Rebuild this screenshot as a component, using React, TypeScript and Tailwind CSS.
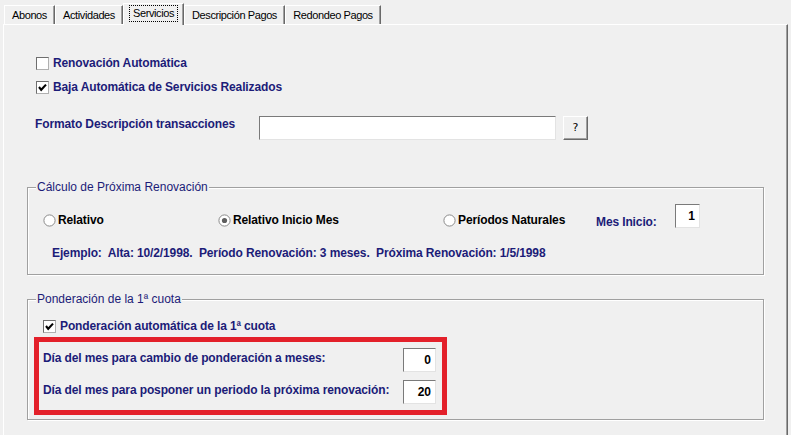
import React from "react"

const navy = "text-[#1c1c78]"

function Tab({ label, width, selected }: { label: string; width: string; selected?: boolean }) {
  if (selected) {
    return (
      <div
        className={`relative z-10 -mb-px flex h-[22px] ${width} items-start justify-center border-l border-t border-r border-l-white border-t-white border-r-[#696969] bg-[#f0f0f0] pt-[1px] shadow-[inset_-1px_0_0_#a0a0a0]`}
      >
        <span className="border border-dotted border-black px-[3px] leading-[15px]">{label}</span>
      </div>
    )
  }
  return (
    <div
      className={`flex h-[19px] ${width} items-start justify-center border-l border-t border-r border-l-white border-t-white border-r-[#696969] pt-[2px] leading-[14px] shadow-[inset_-1px_0_0_#a0a0a0]`}
    >
      {label}
    </div>
  )
}

function CheckBox({ checked, label }: { checked?: boolean; label: string }) {
  return (
    <div className="flex h-[14px] items-center">
      <div className="flex h-[13px] w-[13px] shrink-0 items-center justify-center border border-t-[#6e6e6e] border-l-[#6e6e6e] border-b-[#b0b0b0] border-r-[#b0b0b0] bg-white">
        {checked && (
          <svg width="11" height="11" viewBox="0 0 11 11">
            <polyline points="2,5 4.2,7.8 9,2.6" fill="none" stroke="#000" strokeWidth="2.1" />
          </svg>
        )}
      </div>
      <span className={`ml-[4px] font-bold tracking-[-0.12px] ${navy}`}>{label}</span>
    </div>
  )
}

function Radio({ checked, label, width }: { checked?: boolean; label: string; width: string }) {
  return (
    <div className={`mt-[9px] flex h-[14px] ${width} items-center`}>
      <svg width="13" height="13" viewBox="0 0 13 13" className="shrink-0">
        <circle cx="6.5" cy="6.5" r="5.6" fill="#fff" stroke="#8a8a8a" strokeWidth="1" />
        {checked && <circle cx="6.5" cy="6.5" r="2.6" fill="#5e5e5e" />}
      </svg>
      <span className="ml-[2px] font-bold tracking-[-0.12px] text-black">{label}</span>
    </div>
  )
}

function NumField({ value, width }: { value: string; width: string }) {
  return (
    <div
      className={`flex h-[24px] ${width} shrink-0 items-center justify-end border border-t-[#7a7a7a] border-l-[#7a7a7a] border-b-[#e3e3e3] border-r-[#e3e3e3] bg-white pr-[4px] pb-[1px] font-bold text-black`}
    >
      {value}
    </div>
  )
}

function Group({ title, height, children }: { title: string; height: string; children: React.ReactNode }) {
  return (
    <div
      className={`relative ml-[23px] w-[737px] ${height} border border-[#a0a0a0] shadow-[1px_1px_0_#fff,inset_1px_1px_0_#fff]`}
    >
      <div className={`absolute -top-[8px] left-[8px] bg-[#f0f0f0] px-[1px] ${navy}`}>{title}</div>
      {children}
    </div>
  )
}

export default function App() {
  return (
    <div className="h-[435px] w-[791px] overflow-hidden bg-[#f0f0f0] font-['Liberation_Sans',Arial,sans-serif] text-[12px] leading-[14px]">
      <div className="flex items-end pl-[4px] pt-[3px] text-[11px] tracking-[-0.4px] text-black">
        <Tab label="Abonos" width="w-[51px]" />
        <Tab label="Actividades" width="w-[68px]" />
        <Tab label="Servicios" width="w-[61px]" selected />
        <Tab label="Descripción Pagos" width="w-[101px]" />
        <Tab label="Redondeo Pagos" width="w-[96px]" />
      </div>

      <div className="ml-[3px] h-[420px] w-[785px] border-l border-t border-r border-l-white border-t-white border-r-[#696969] shadow-[inset_-1px_0_0_#a0a0a0]">
        <div className="ml-[32px] mt-[31px] flex flex-col gap-[10px]">
          <CheckBox label="Renovación Automática" />
          <CheckBox label="Baja Automática de Servicios Realizados" checked />
        </div>

        <div className="ml-[31px] mt-[22px] flex items-start">
          <span className={`mt-[1px] w-[224px] font-bold tracking-[-0.12px] ${navy}`}>Formato Descripción transacciones</span>
          <div className="h-[24px] w-[297px] border border-t-[#7a7a7a] border-l-[#7a7a7a] border-b-[#e3e3e3] border-r-[#e3e3e3] bg-white" />
          <button className="ml-[7px] flex h-[24px] w-[25px] items-center justify-center border border-t-white border-l-white border-b-[#696969] border-r-[#696969] bg-[#f0f0f0] pb-[1px] font-['DejaVu_Sans',sans-serif] text-[11px] text-black shadow-[inset_-1px_-1px_0_#a0a0a0]">
            ?
          </button>
        </div>

        <div className="mt-[47px]">
          <Group title="Cálculo de Próxima Renovación" height="h-[88px]">
            <div className="ml-[15px] mt-[16px] flex items-start">
              <Radio label="Relativo" width="w-[175px]" />
              <Radio label="Relativo Inicio Mes" width="w-[225px]" checked />
              <Radio label="Períodos Naturales" width="w-[153px]" />
              <span className={`mt-[11px] w-[79px] font-bold tracking-[-0.12px] ${navy}`}>Mes Inicio:</span>
              <NumField value="1" width="w-[25px]" />
            </div>
            <div className={`ml-[24px] mt-[17px] font-bold tracking-[-0.12px] ${navy}`}>
              Ejemplo:&nbsp; Alta: 10/2/1998.&nbsp; Período Renovación: 3 meses.&nbsp; Próxima Renovación: 1/5/1998
            </div>
          </Group>
        </div>

        <div className="mt-[24px]">
          <Group title="Ponderación de la 1ª cuota" height="h-[121px]">
            <div className="ml-[15px] mt-[19px]">
              <CheckBox label="Ponderación automática de la 1ª cuota" checked />
            </div>
            <div className="ml-[6px] mt-[4px] flex h-[78px] w-[413px] flex-col gap-[8px] border-[5px] border-[#e3202a] pl-[4px] pt-[6px]">
              <div className="flex items-start">
                <span className={`mt-[3px] w-[360px] font-bold tracking-[-0.12px] ${navy}`}>Día del mes para cambio de ponderación a meses:</span>
                <NumField value="0" width="w-[33px]" />
              </div>
              <div className="flex items-start">
                <span className={`mt-[3px] w-[360px] font-bold tracking-[-0.12px] ${navy}`}>Día del mes para posponer un periodo la próxima renovación:</span>
                <NumField value="20" width="w-[33px]" />
              </div>
            </div>
          </Group>
        </div>
      </div>
    </div>
  )
}
